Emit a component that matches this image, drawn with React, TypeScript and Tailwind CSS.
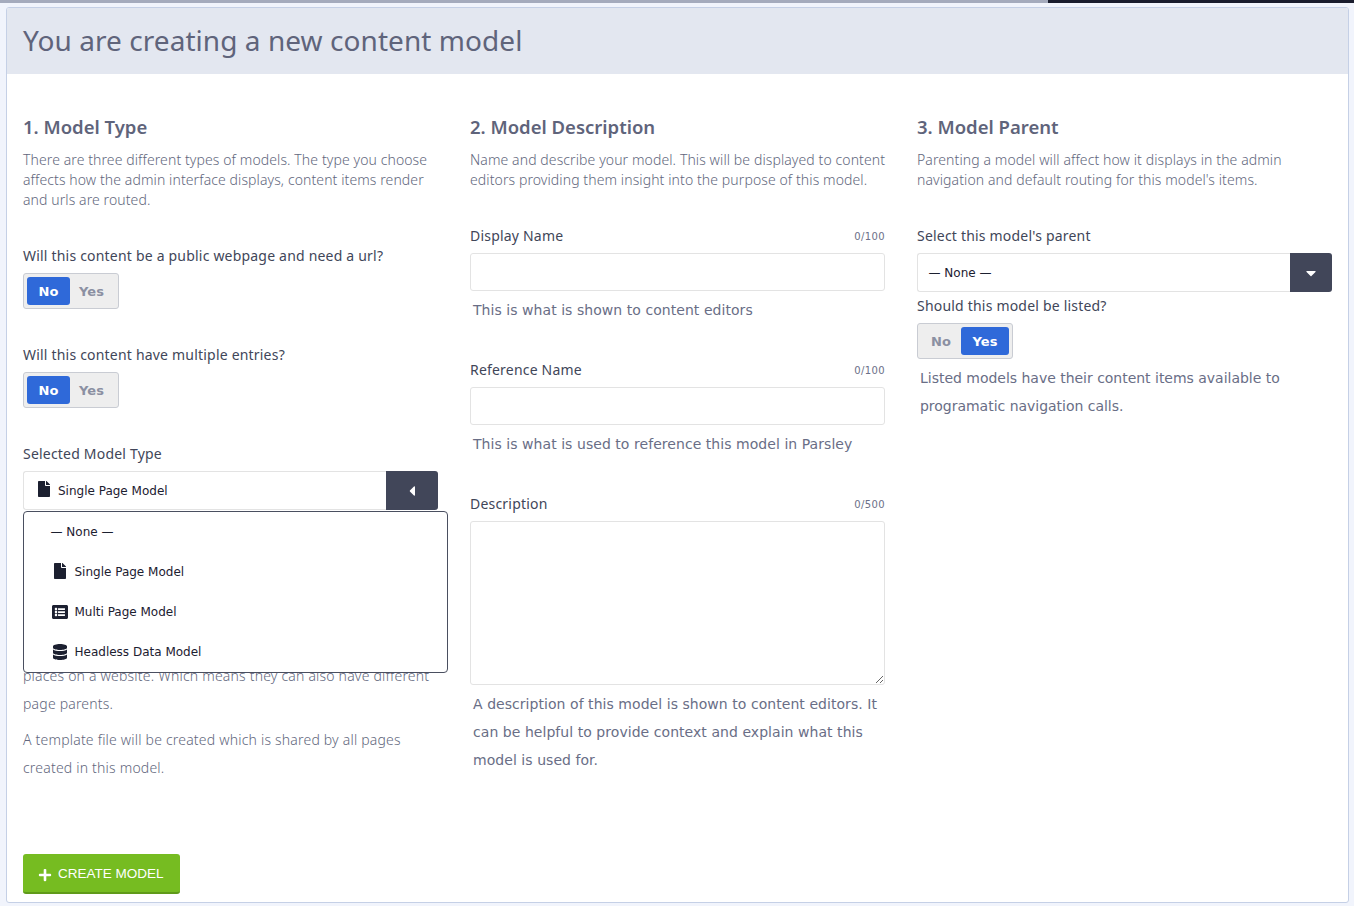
import { FaFile, FaListAlt, FaDatabase, FaPlus, FaCaretLeft, FaCaretDown } from "react-icons/fa";

const MULI = "font-['Noto_Sans','Open_Sans',sans-serif]";
const DEJAVU = "font-['DejaVu_Sans',Verdana,sans-serif]";

function Toggle({ active }: { active: "No" | "Yes" }) {
  const on = "bg-[#2f69d9] text-white rounded-[3px] h-7 pt-[1px] flex items-center justify-center";
  const off = "text-[#8b90a2] h-7 pt-[1px] flex items-center justify-center";
  return (
    <div className={`${DEJAVU} w-[96px] h-9 rounded-[3px] border border-[#c9ccd3] bg-[#eeeeee] p-[3px] flex text-[13px] font-bold`}>
      {active === "No" ? (
        <>
          <span className={`${on} w-[43px]`}>No</span>
          <span className={`${off} w-[43px]`}>Yes</span>
        </>
      ) : (
        <>
          <span className={`${off} w-[40px]`}>No</span>
          <span className={`${on} w-[48px]`}>Yes</span>
        </>
      )}
    </div>
  );
}

function Label({ children, count, className = "" }: { children: string; count?: string; className?: string }) {
  return (
    <div className={`flex items-center justify-between h-5 ${className}`}>
      <span className={`${MULI} text-[14px] leading-5 tracking-[0.2px] text-[#414659]`}>{children}</span>
      {count && <span className={`${DEJAVU} text-[10px] tracking-[0.4px] text-[#6b7088]`}>{count}</span>}
    </div>
  );
}

function Heading({ children }: { children: string }) {
  return <h2 className={`${MULI} h-7 text-[18.5px] leading-[26px] font-semibold text-[#5f647b]`}>{children}</h2>;
}

function Desc({ lines }: { lines: string[] }) {
  return (
    <p className={`${MULI} mt-2 text-[14px] leading-5 font-light tracking-[0.1px] text-[#62677d]`}>
      {lines.map((l) => (
        <span key={l} className="block whitespace-nowrap">{l}</span>
      ))}
    </p>
  );
}

function Help({ lines, className = "tracking-[0.05px]" }: { lines: string[]; className?: string }) {
  return (
    <p className={`${DEJAVU} px-[3px] text-[14px] leading-7 text-[#696e86] ${className}`}>
      {lines.map((l) => (
        <span key={l} className="block whitespace-nowrap">{l}</span>
      ))}
    </p>
  );
}

function Option({ icon, children }: { icon: React.ReactNode; children: string }) {
  return (
    <div className="h-10 flex items-center pl-[28px]">
      <span className="w-4 mr-[6.5px] flex justify-center text-[#1c2030] text-[16px]">{icon}</span>
      <span>{children}</span>
    </div>
  );
}

export default function App() {
  return (
    <div className="h-[906px] w-full overflow-hidden bg-[#f1f4fc] flex flex-col">
      <div className="flex h-[3px] shrink-0">
        <div className="w-[1048px] bg-[#a5abbd]" />
        <div className="flex-1 bg-[#1a1d2e]" />
      </div>
      <div className="mx-[6px] mt-[4px] h-[896px] w-[1343px] shrink-0 rounded-[3px] border border-[#c5d0e6] bg-white flex flex-col overflow-hidden">
        <header className="h-[66px] shrink-0 bg-[#e3e7f0] flex items-center px-4 pb-[2px]">
          <h1 className={`${MULI} text-[28px] leading-9 tracking-[0.06px] text-[#5f647b]`}>You are creating a new content model</h1>
        </header>
        <div className="px-4 pt-10 pb-2 flex-1 flex flex-col">
          <div className="grid grid-cols-[415px_415px_415px] gap-x-8">
            <section className="relative">
              <Heading>1. Model Type</Heading>
              <Desc lines={["There are three different types of models. The type you choose", "affects how the admin interface displays, content items render", "and urls are routed."]} />
              <Label className="mt-9">Will this content be a public webpage and need a url?</Label>
              <div className="mt-[7px]"><Toggle active="No" /></div>
              <Label className="mt-9">Will this content have multiple entries?</Label>
              <div className="mt-[7px]"><Toggle active="No" /></div>
              <Label className="mt-9">Selected Model Type</Label>
              <div className={`${DEJAVU} mt-[7px] h-[39px] flex text-[12px] text-[#1c2030]`}>
                <div className="flex-1 flex items-center border border-[#e3e3e3] border-r-0 rounded-l-[3px] pl-3 bg-white">
                  <FaFile className="text-[16px] mr-[6px] -mt-[3px]" />
                  Single Page Model
                </div>
                <div className="w-[52px] bg-[#414659] rounded-r-[3px] flex items-center justify-center text-white text-[16px]">
                  <FaCaretLeft />
                </div>
              </div>
              <div className={`${DEJAVU} absolute z-10 left-0 top-[397px] w-[425px] h-[162px] bg-white border border-[#4a4f60] rounded-[4px] text-[12px] text-[#1c2030]`}>
                <div className="h-10 flex items-center pl-[26.5px]">— None —</div>
                <Option icon={<FaFile className="-mt-[3px]" />}>Single Page Model</Option>
                <Option icon={<FaListAlt className="-mt-[1px]" />}>Multi Page Model</Option>
                <Option icon={<FaDatabase className="-mt-[1px]" />}>Headless Data Model</Option>
              </div>
              <div className={`${MULI} mt-[152px] text-[14px] leading-7 font-light tracking-[0.2px] text-[#62677d]`}>
                <span className="block whitespace-nowrap">places on a website. Which means they can also have different</span>
                <span className="block whitespace-nowrap">page parents.</span>
                <span className="block whitespace-nowrap mt-2">A template file will be created which is shared by all pages</span>
                <span className="block whitespace-nowrap">created in this model.</span>
              </div>
            </section>

            <section>
              <Heading>2. Model Description</Heading>
              <Desc lines={["Name and describe your model. This will be displayed to content", "editors providing them insight into the purpose of this model."]} />
              <Label className="mt-9" count="0/100">Display Name</Label>
              <input className="mt-[7px] block h-[38px] w-full rounded-[3px] border border-[#e3e3e3] bg-white" />
              <div className="mt-[5px]"><Help lines={["This is what is shown to content editors"]} /></div>
              <Label className="mt-[36px]" count="0/100">Reference Name</Label>
              <input className="mt-[7px] block h-[38px] w-full rounded-[3px] border border-[#e3e3e3] bg-white" />
              <div className="mt-[5px]"><Help lines={["This is what is used to reference this model in Parsley"]} /></div>
              <Label className="mt-[36px]" count="0/500">Description</Label>
              <textarea className="mt-[7px] block h-[164px] w-full rounded-[3px] border border-[#e3e3e3] bg-white" />
              <div className="mt-[5px]"><Help lines={["A description of this model is shown to content editors. It", "can be helpful to provide context and explain what this", "model is used for."]} /></div>
            </section>

            <section>
              <Heading>3. Model Parent</Heading>
              <Desc lines={["Parenting a model will affect how it displays in the admin", "navigation and default routing for this model's items."]} />
              <Label className="mt-9">Select this model's parent</Label>
              <div className={`${DEJAVU} mt-[7px] h-[39px] flex text-[12px] text-[#1c2030]`}>
                <div className="flex-1 flex items-center border border-[#e3e3e3] border-r-0 rounded-l-[3px] pl-[10.5px] bg-white">— None —</div>
                <div className="w-[42px] bg-[#414659] rounded-r-[3px] flex items-center justify-center text-white text-[16px]">
                  <FaCaretDown />
                </div>
              </div>
              <Label className="mt-1">Should this model be listed?</Label>
              <div className="mt-[7px]"><Toggle active="Yes" /></div>
              <div className="mt-[5px]"><Help className="tracking-[-0.02px]" lines={["Listed models have their content items available to", "programatic navigation calls."]} /></div>
            </section>
          </div>
          <div className="mt-auto">
            <button className="font-['Liberation_Sans',Arial,sans-serif] h-10 w-[157px] rounded-[3px] bg-[#76bc21] border-b-2 border-[#5f9a1a] text-white text-[13.5px] flex items-center pl-[15px] gap-[6px]">
              <FaPlus className="text-[14px] mt-[3px]" />
              <span className="mt-[2px]">CREATE MODEL</span>
            </button>
          </div>
        </div>
      </div>
    </div>
  );
}
